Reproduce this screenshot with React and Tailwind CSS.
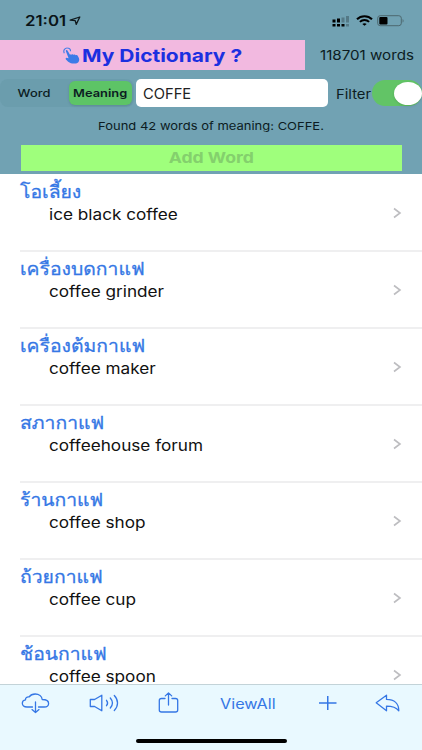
import React, { useState } from "react";

const entries = [
  { word: "โอเลี้ยง", meaning: "ice black coffee" },
  { word: "เครื่องบดกาแฟ", meaning: "coffee grinder" },
  { word: "เครื่องต้มกาแฟ", meaning: "coffee maker" },
  { word: "สภากาแฟ", meaning: "coffeehouse forum" },
  { word: "ร้านกาแฟ", meaning: "coffee shop" },
  { word: "ถ้วยกาแฟ", meaning: "coffee cup" },
  { word: "ช้อนกาแฟ", meaning: "coffee spoon" },
];

function StatusBar() {
  return (
    <div className="flex h-10 items-start pl-[25px] pr-[17px] pt-[13px] text-[#0a1418]">
      <span className="w-[42px] text-[14px] leading-4 font-semibold whitespace-nowrap">
        <span className="inline-block origin-left scale-x-[1.2]">21:01</span>
      </span>
      <svg className="ml-[2px] mt-[2px]" width="13" height="12" viewBox="0 0 13 12" fill="none">
        <path d="M1.2 5.2 10.8 2 7.2 9.4 6.2 5.6Z" stroke="#10191c" strokeWidth="1.3" strokeLinejoin="round" />
      </svg>
      <div className="ml-auto flex items-start">
        <svg className="mt-[2px]" width="18" height="12" viewBox="0 0 18 12" fill="#000">
          <rect x="0.5" y="4.5" width="3" height="3" />
          <rect x="5" y="3.5" width="3" height="4" />
          <rect x="9.5" y="2.5" width="3" height="5" opacity=".25" />
          <rect x="14" y="1" width="3" height="6.5" opacity=".25" />
          <rect x="0.5" y="9" width="3" height="2.5" />
          <rect x="5" y="9" width="3" height="2.5" />
          <rect x="9.5" y="9" width="3" height="2.5" />
          <rect x="14" y="9" width="3" height="2.5" opacity=".25" />
        </svg>
        <svg className="ml-[6px] mt-[2px]" width="17" height="11" viewBox="0 0 17 11" fill="none" stroke="#000" strokeWidth="2">
          <path d="M1 4.3C5 .2 12 .2 16 4.3M3.9 6.9c2.6-2.6 6.6-2.6 9.2 0" />
          <path d="M6.3 8.9c1.2-1 3.2-1 4.4 0L8.5 10.8Z" fill="#000" stroke="none" />
        </svg>
        <svg className="ml-[4px] mt-[2px]" width="28" height="12" viewBox="0 0 28 12">
          <rect x="0.7" y="0.7" width="23.6" height="10" rx="2.5" fill="none" stroke="#4d686f" />
          <rect x="2.3" y="2" width="8.2" height="7.5" rx="1" fill="#000" />
          <path d="M25.6 4v3.6c1.3-.5 1.3-3 0-3.6Z" fill="#4d686f" />
        </svg>
      </div>
    </div>
  );
}

function TapIcon() {
  return (
    <svg className="mt-[1px] shrink-0" width="18" height="17" viewBox="0 0 18 17" fill="none">
      <path d="M1.3 6.2C-.2 3.2 2.2.8 4.4 1c2 .1 3.2 1.4 3.1 3.2" stroke="#3c7be8" strokeWidth="1.1" />
      <path
        d="M2.9 4.3c-.5-1.3 1-1.9 1.6-.8l2.5 4.3c.5-.7 1.4-.7 1.9 0 .5-.7 1.5-.6 1.9.1.6-.6 1.5-.4 1.9.4.8-.7 1.7-.3 2 .5l1.2 2.2c.6 1.5.4 3.3-.8 4.4-1.7 1.3-5 1.4-7.2.8-2-.8-3.7-2.3-5-3.8-.7-1.1.2-2 1.3-1.5l1.4.4Z"
        fill="#3c7be8"
      />
    </svg>
  );
}

function Header() {
  const [mode, setMode] = useState("Meaning");
  const [filter, setFilter] = useState(true);

  return (
    <header className="h-[174px] shrink-0 bg-[#71a2b3]">
      <StatusBar />
      <div className="flex h-[30px]">
        <div className="flex w-[305px] shrink-0 items-center bg-[#f2b9e0] pl-[63px] text-[#1b30e0]">
          <TapIcon />
          <h1 className="ml-px pt-px text-[18px] font-bold leading-[30px] whitespace-nowrap origin-left scale-x-[1.165]">
            My Dictionary ?
          </h1>
        </div>
        <div className="pl-[15px] text-[13px] leading-[31px] whitespace-nowrap text-[#0c1c22]">
          <span className="inline-block origin-left scale-x-[1.165]">118701 words</span>
        </div>
      </div>

      <div className="mt-[8px] flex h-[30px] items-center">
        <div className="flex h-7 w-[134px] items-center rounded-lg bg-[#6b9dad]">
          {["Word", "Meaning"].map((m) => (
            <button
              key={m}
              onClick={() => setMode(m)}
              className={`flex h-6 items-center justify-center rounded-md text-[11px] text-[#0c1c22]
                ${mode === m ? "bg-[#5dc466] font-semibold shadow-sm" : "font-medium"}
                ${m === "Word" ? "w-[67px]" : "ml-[2px] w-[63px]"}`}
            >
              <span className="inline-block scale-x-[1.17]">{m}</span>
            </button>
          ))}
        </div>
        <div className="ml-[2px] flex h-[28px] w-[192px] shrink-0 items-center rounded-[5px] bg-white pl-[7px] text-[14px] text-[#222]">
          <span className="inline-block origin-left scale-x-[1.05]">COFFE</span>
        </div>
        <div className="ml-2 w-[36px] shrink-0 pt-[3px] text-[13px] text-[#0c1c22]">
          <span className="inline-block origin-left scale-x-[1.14]">Filter</span>
        </div>
        <button
          onClick={() => setFilter(!filter)}
          className={`flex h-[26px] w-[50px] shrink-0 items-center rounded-full
            ${filter ? "justify-end bg-[#62c466]" : "bg-gray-300"}`}
        >
          <span className="h-[23px] w-[28px] rounded-[50%] bg-white shadow-sm" />
        </button>
      </div>

      <p className="mt-[9px] text-center text-[11px] font-normal leading-[18px] text-[#0c1c22] scale-x-[1.18]">
        Found 42 words of meaning: COFFE.
      </p>
      <button className="ml-[20.5px] mt-[10px] flex h-[26px] w-[381px] items-center justify-center bg-[#9fff7c] text-[15px] font-bold text-[#84d06d]">
        <span className="inline-block scale-x-[1.175]">Add Word</span>
      </button>
    </header>
  );
}

function Entry({ word, meaning }) {
  return (
    <li className="ml-5 flex h-[77px] items-center border-b-2 border-[#efeff0]">
      <div className="h-full flex-1 whitespace-nowrap">
        <div className="h-[30px] pt-[4px] text-[18px] leading-[26px] text-[#3577e5] font-['Loma',sans-serif] [-webkit-text-stroke:0.3px_#3577e5]">
          <span className="inline-block origin-left scale-x-[1.075]">{word}</span>
        </div>
        <div className="pl-[29px] text-[15px] leading-[20px] text-[#111]">
          <span className="inline-block origin-left scale-x-[1.145]">{meaning}</span>
        </div>
      </div>
      <svg className="mr-[20px] mt-px" width="10" height="12" viewBox="0 0 10 12" fill="none">
        <path d="M2 1.5 8 6 2 10.5" stroke="#bdbdc0" strokeWidth="1.6" />
      </svg>
    </li>
  );
}

function Toolbar() {
  return (
    <footer className="h-[66px] shrink-0 border-t border-[#c3d3d8] bg-[#e9f9ff]">
      <div className="flex h-9 items-center text-[#3577e5]">
        <svg className="ml-[21px]" width="29" height="22" viewBox="0 0 29 22" fill="none" stroke="currentColor" strokeWidth="1.3" strokeLinecap="round" strokeLinejoin="round">
          <path d="M11.5 15H6c-3 0-4.7-1.6-4.7-3.7 0-1.9 1.3-3.2 3.2-3.4C4.3 5.8 6 4.5 8.2 4.9 9.5 2.9 11.7 2 14.2 2c3.8 0 6.7 2.3 7 5.5 3.7 0 6.4 1.5 6.4 4 0 2.2-1.9 3.5-4.4 3.5h-5.7" />
          <path d="M14.5 10v10.5M11 17.6l3.5 3 3.5-3" />
        </svg>
        <svg className="ml-[39px]" width="31" height="18" viewBox="0 0 31 18" fill="none" stroke="currentColor" strokeWidth="1.3" strokeLinecap="round" strokeLinejoin="round">
          <path d="M1.3 5.5h4.3L12.800 1.2v15.6L5.600 12.5H1.300ZM17.5 6.3c1.3 1.6 1.3 3.8 0 5.4M21.300 4c2.6 3 2.6 7 0 10M25.300 1.5c4.3 4.5 4.3 10.5 0 15" />
        </svg>
        <svg className="ml-[38px]" width="21" height="22" viewBox="0 0 21 22" fill="none" stroke="currentColor" strokeWidth="1.3" strokeLinecap="round" strokeLinejoin="round">
          <path d="M7 6.5H3.5c-1.4 0-2.2.6-2.2 2V18c0 1.400.8 2 2.200 2h14c1.400 0 2.200-.6 2.200-2V8.500c0-1.400-.8-2-2.200-2H14M10.500 13V1M7.300 3.900l3.200-3 3.200 3" />
        </svg>
        <button className="ml-[41px] w-[56px] text-left text-[14px] whitespace-nowrap">
          <span className="inline-block origin-left scale-x-[1.16]">ViewAll</span>
        </button>
        <svg className="ml-[43px]" width="19" height="16" viewBox="0 0 19 16" fill="none" stroke="currentColor" strokeWidth="1.5">
          <path d="M0 8h17.5M8.75 1v14" />
        </svg>
        <svg className="ml-[37px]" width="26" height="19" viewBox="0 0 26 19" fill="none" stroke="currentColor" strokeWidth="1.3" strokeLinejoin="round">
          <path d="M1.2 8.8 11.5 1.2v4.2c8 0 12.3 4.3 12.3 11.4-2.5-3.3-6-4.7-12.3-4.7v4.7Z" />
        </svg>
      </div>
      <div className="mx-auto mt-[18px] h-[4px] w-[151px] rounded-full bg-black" />
    </footer>
  );
}

export default function App() {
  return (
    <div className="flex h-[750px] w-[422px] flex-col overflow-hidden bg-white font-['Inter','Noto_Sans',sans-serif]">
      <Header />
      <ul className="min-h-0 flex-1 overflow-hidden pt-px">
        {entries.map((e) => (
          <Entry key={e.word} {...e} />
        ))}
      </ul>
      <Toolbar />
    </div>
  );
}
